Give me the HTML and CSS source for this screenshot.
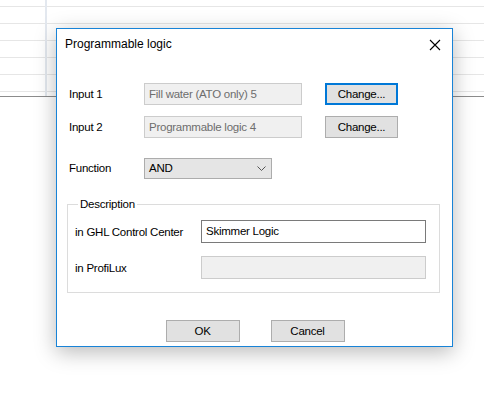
FILE: index.html
```html
<!DOCTYPE html>
<html lang="en">
  <head>
    <meta charset="utf-8" />
    <title>Programmable logic</title>
    <link rel="stylesheet" href="styles.css">
  </head>

  <body>
    <div class="sheet"></div>

    <div class="dialog">
      <div class="dialog__title">
        <span>Programmable logic</span>
        <svg class="dialog__close" width="12" height="12" viewBox="0 0 12 12">
          <path d="M1 1l10 10M11 1L1 11" stroke="#000" stroke-width="1.1" />
        </svg>
      </div>

      <div class="dialog__body">
        <div class="form">
          <span class="label">Input 1</span>
          <div class="field field_disabled">Fill water (ATO only) 5</div>
          <button class="btn btn_default">Change...</button>

          <span class="label">Input 2</span>
          <div class="field field_disabled">Programmable logic 4</div>
          <button class="btn">Change...</button>
        </div>

        <div class="func">
          <span class="label">Function</span>
          <div class="select">
            <span>AND</span>
            <svg width="9" height="5" viewBox="0 0 9 5">
              <path d="M0.5 0.5l4 4 4-4" fill="none" stroke="#555" stroke-width="1" />
            </svg>
          </div>
        </div>

        <fieldset class="group">
          <legend>Description</legend>
          <div class="group__row">
            <span class="label">in GHL Control Center</span>
            <div class="field field_edit">Skimmer Logic</div>
          </div>
          <div class="group__row">
            <span class="label">in ProfiLux</span>
            <div class="field field_disabled field_tall"></div>
          </div>
        </fieldset>

        <div class="actions">
          <button class="btn btn_wide">OK</button>
          <button class="btn btn_wide">Cancel</button>
        </div>
      </div>
    </div>
  </body>
</html>
```

FILE: styles.css
```css
body {
  margin: 0;
  width: 484px;
  height: 405px;
  position: relative;
  overflow: hidden;
  background: #fff;
  font-family: "Liberation Sans", Arial, sans-serif;
  font-size: 11.5px;
  letter-spacing: -0.25px;
  line-height: 14px;
  color: #000;
}

/* spreadsheet behind the dialog */
.sheet {
  height: 96px;
  border-bottom: 1px solid #8c8c8c;
  background:
    linear-gradient(to right, transparent 45px, #e3e8ef 45px, #e3e8ef 47px, transparent 47px),
    repeating-linear-gradient(to bottom, transparent 0, transparent 6px, #e6e6e6 6px, #e6e6e6 7px, transparent 7px, transparent 17px);
}

.dialog {
  position: absolute;
  left: 56px;
  top: 28px;
  width: 397px;
  height: 319px;
  box-sizing: border-box;
  border: 1px solid #1883d7;
  background: #fff;
  box-shadow: 0 5px 20px rgba(0, 0, 0, 0.28);
  display: flex;
  flex-direction: column;
}

.dialog__title {
  height: 30px;
  display: flex;
  align-items: center;
  justify-content: space-between;
  padding: 0 11px 0 8px;
  font-size: 12px;
  letter-spacing: 0;
}

.dialog__close {
  margin-top: 1px;
}

.dialog__body {
  padding: 24px 0 0 12px;
}

.form {
  display: grid;
  grid-template-columns: 75px 181px 73px;
  row-gap: 11px;
  align-items: center;
}

.label {
  line-height: 22px;
}

.field {
  box-sizing: border-box;
  height: 22px;
  line-height: 20px;
  padding: 0 4px;
  white-space: nowrap;
  overflow: hidden;
}

.form .field {
  width: 158px;
}

.field_disabled {
  background: #f0f0f0;
  border: 1px solid #cccccc;
  color: #6d6d6d;
}

.field_edit,
.field_tall {
  height: 23px;
  line-height: 21px;
}

.field_edit {
  background: #fff;
  border: 1px solid #7a7a7a;
}

.btn {
  box-sizing: border-box;
  height: 22px;
  padding: 0;
  font: inherit;
  letter-spacing: inherit;
  color: #000;
  background: #e1e1e1;
  border: 1px solid #adadad;
}

.btn_default {
  border: 2px solid #0078d7;
}

.btn_wide {
  width: 74px;
}

.func {
  display: grid;
  grid-template-columns: 75px 128px;
  align-items: center;
  margin-top: 19px;
}

.select {
  box-sizing: border-box;
  height: 21px;
  display: flex;
  align-items: center;
  justify-content: space-between;
  padding: 0 5px 0 4px;
  background: #e5e5e5;
  border: 1px solid #acacac;
}

.group {
  box-sizing: border-box;
  width: 373px;
  height: 96px;
  margin: 18px 0 0 -2px;
  padding: 9px 0 0 7px;
  border: 1px solid #dcdcdc;
}

.group legend {
  padding: 0 2px;
  margin-left: 3px;
}

.group__row {
  display: grid;
  grid-template-columns: 126px 225px;
  align-items: center;
  margin-bottom: 13px;
}

.actions {
  display: flex;
  gap: 31px;
  justify-content: center;
  margin: 27px 0 0 -11px;
}
```
